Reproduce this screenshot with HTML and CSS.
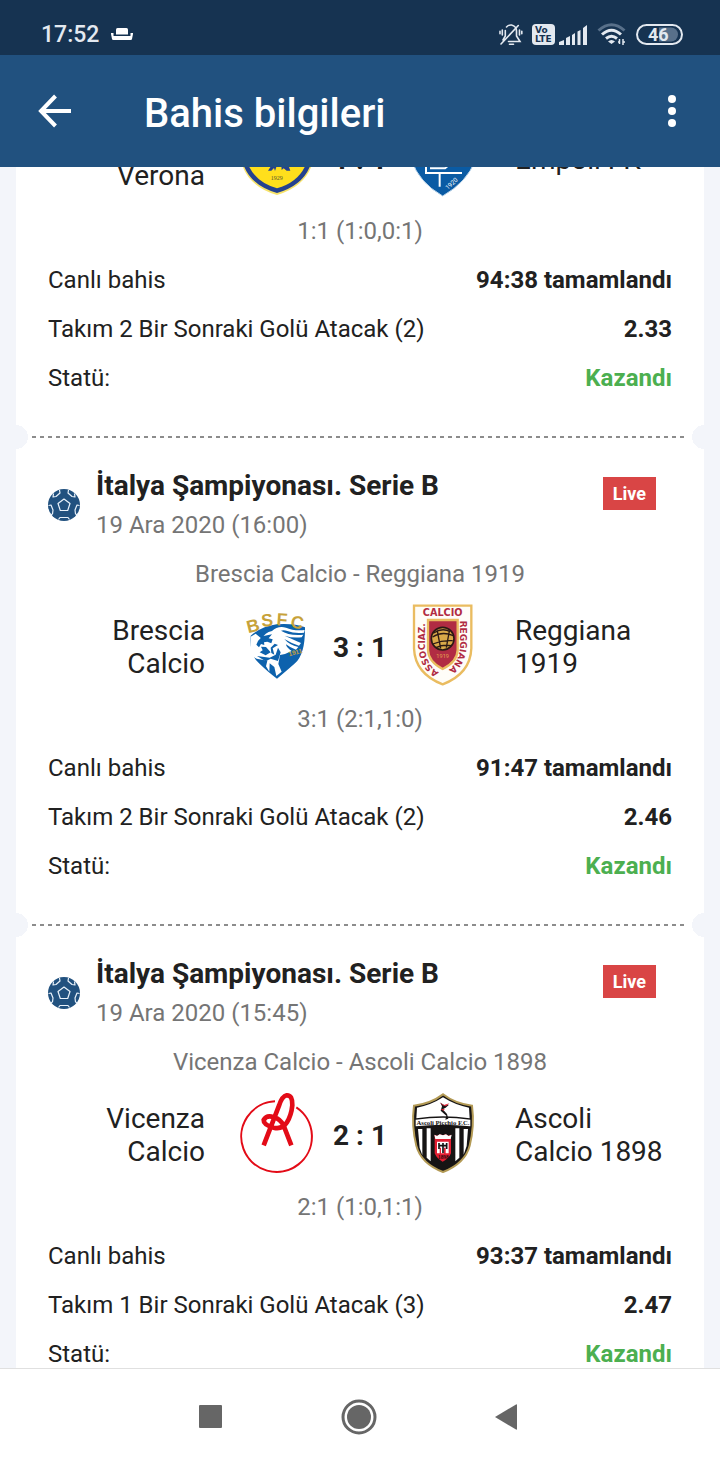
FILE: index.html
```html
<!DOCTYPE html>
<html lang="tr">
  <head>
    <meta charset="UTF-8" />
    <meta name="viewport" content="width=device-width, initial-scale=1.0" />
    <title>Bahis bilgileri</title>
    <link rel="stylesheet" href="styles.css">
  </head>
  <body>
    <svg class="defs" width="0" height="0" aria-hidden="true">
      <symbol id="ball" viewBox="0 0 32 32">
        <circle cx="16" cy="16" r="16" fill="#21517f" />
        <g fill="none" stroke="#e8f1fa" stroke-width="1.2" stroke-linejoin="round">
          <path d="M16 10l6 4.500-2.300 7h-7.400l-2.300-7z" />
          <path d="M5.500 4.500l-.5 3.500 3-.5 4-3.500-.5-3" />
          <path d="M26.500 4.500l.5 3.500-3-.5-4-3.500.5-3" />
          <path d="M.5 16.500l2.500-.5 2 5-.5 4-2.500 1" />
          <path d="M31.500 16.500l-2.500-.5-2 5 .5 4 2.500 1" />
          <path d="M10.500 30.500l1.500-2h8l1.500 2" />
        </g>
      </symbol>
    </svg>

    <div class="screen">
      <div class="status-bar">
        <span class="time">17:52</span>
        <svg class="sofa" width="24" height="14" viewBox="0 0 24 14" fill="#fff">
          <path d="M6 1.500q0-1.500 1.500-1.500h9q1.500 0 1.500 1.500v5H6z" />
          <path d="M1 5h2.500v3h17V5H23v1l-1 5q0 1-1.500 1h-17Q2 12 2 11L1 6z" />
        </svg>
        <div class="status-icons">
          <svg width="24" height="24" viewBox="0 0 24 24" fill="none" stroke="#e3e9f0" stroke-width="1.600" stroke-linecap="round">
            <path d="M7.500 4Q9.500 1.800 12.500 2Q17.500 3 17.500 8.500V13L21 18.500H9.500" />
            <path d="M6.300 7.500V13L4 17M19.300 2.500L2 21M10.500 21.300h4" />
            <path d="M3.300 7v5M1 8.200v2.600M20.500 7v5M22.800 8.200v2.600" />
          </svg>
          <svg class="volte" width="23" height="21" viewBox="0 0 23 21">
            <rect width="23" height="21" rx="4" fill="#e3e9f0" />
            <text x="3" y="9">Vo</text>
            <text x="3" y="18">LTE</text>
          </svg>
          <svg class="signal" width="28" height="20" viewBox="0 0 28 20" fill="#e3e9f0">
            <path d="M0 20v-3l5-2v5zM7 20v-7l4-2v9zM13 20V10l3-2v12zM18.500 20V6.500l3-1.500v15zM24 20V3l4-3v20z" />
          </svg>
          <svg class="wifi" width="30" height="23" viewBox="0 0 30 23" fill="none" stroke="#e3e9f0" stroke-width="3">
            <path d="M1.500 7.500q13-11.500 26 0" stroke="#58708a" />
            <path d="M5 11.500q9.500-8.500 19 0M9 15.500q5.500-4.500 11 0" />
            <path d="M11 18.500q3.500-3 7 0L14.500 21z" fill="#e3e9f0" stroke="none" />
            <path d="M22.500 16v5M26 16v6M21 19h2M26 19h2" stroke-width="1.500" />
          </svg>
          <svg class="battery" width="47" height="21" viewBox="0 0 47 21">
            <path d="M23 3.500h12a7 7 0 0 1 0 14H23z" fill="#58708a" />
            <rect x="1" y="1" width="45" height="19" rx="9.500" fill="none" stroke="#e3e9f0" stroke-width="2" />
            <text x="12" y="17">46</text>
          </svg>
        </div>
      </div>

      <header class="app-bar">
        <button class="icon-btn" aria-label="Geri">
          <svg width="36" height="36" viewBox="0 0 36 36" fill="none" stroke="#fff" stroke-width="4">
            <path d="M18.500 3L4 18l14.500 15M3.500 18H34" />
          </svg>
        </button>
        <h1>Bahis bilgileri</h1>
        <button class="icon-btn menu" aria-label="Menü">
          <svg width="8" height="32" viewBox="0 0 8 32" fill="#fff">
            <circle cx="4" cy="4" r="4" />
            <circle cx="4" cy="16" r="4" />
            <circle cx="4" cy="28" r="4" />
          </svg>
        </button>
      </header>

      <main class="content">
        <div class="coupon">
          <section class="bet scrolled">
            <div class="teams">
              <span class="team home"><br />Verona</span>
              <svg class="crest" viewBox="396 -135 264 264">
                <path d="M422-90V0Q440 78 531 105Q622 78 640 0V-90z" fill="#f7e36a" />
                <path d="M426-90V0Q444 74 531 99Q618 74 636 0V-90z" fill="#24418f" />
                <path d="M440-80V0Q458 64 531 85Q604 64 622 0V-80z" fill="#ffdf1c" />
                <path d="M505 10l7 10-8 12h10l8-8 3 9 5-15zM575 10l-9 8 5 14h-11l-9-7-6 5-1-13z" fill="#24418f" />
                <text x="512" y="60" font-family="Liberation Serif" font-size="18" fill="#5c5630">1929</text>
              </svg>
              <span class="score">1 : 1</span>
              <svg class="crest" viewBox="0 -135 264 264">
                <path d="M35-90V0Q55 66 128 108Q202 66 226 0V-90z" fill="#0a5ba4" stroke="#b9d4ea" stroke-width="3" />
                <g fill="none" stroke="#fff" stroke-width="6">
                  <path d="M78 10V39H186M119 39V80M90 25H135L150 12" />
                </g>
                <text x="143" y="90" transform="rotate(-42 143 90)" font-size="19" fill="#fff">1920</text>
              </svg>
              <span class="team">Empoli FK</span>
            </div>
            <p class="periods">1:1 (1:0,0:1)</p>
            <dl class="rows">
              <div><dt>Canlı bahis</dt><dd>94:38 tamamlandı</dd></div>
              <div><dt>Takım 2 Bir Sonraki Golü Atacak (2)</dt><dd>2.33</dd></div>
              <div><dt>Statü:</dt><dd class="won">Kazandı</dd></div>
            </dl>
          </section>

          <div class="tear"></div>

          <section class="bet">
            <div class="league">
              <svg class="sport" width="32" height="32"><use href="#ball" /></svg>
              <div class="league-info">
                <h2>İtalya Şampiyonası. Serie B</h2>
                <p>19 Ara 2020 (16:00)</p>
              </div>
              <span class="live">Live</span>
            </div>
            <p class="match">Brescia Calcio - Reggiana 1919</p>
            <div class="teams">
              <span class="team home">Brescia<br />Calcio</span>
              <svg class="crest" viewBox="6 24 264 264">
                <path d="M62 122Q58 180 87 205Q118 235 141 251Q160 236 195 205Q226 178 225 97Q190 84 140 88Q95 94 62 122z" fill="#0d62ad" />
                <path d="M96 132Q104 112 126 108Q143 92 168 98Q190 108 224 105L222 113Q193 116 172 108Q161 104 153 107Q177 123 220 119L215 127Q187 130 164 122L204 140L213 144L207 152Q184 145 163 132Q178 150 205 156L198 164Q180 158 168 148Q169 158 185 168L165 177L150 180L145 207L155 230L139 243L133 216L119 205L118 230L108 214L112 197L80 191L62 182V125L77 116z" fill="#fff" />
                <path d="M84 138l13-14 29-6-10 12 12 3-4 12-12-5-10 2 1 8-10-3-6 10-8-8zM93 155l15 1 14 16-15 9-18-9 9-6zM122 158l12-12 10 4-16 10 5 19-9-5zM81 183l38 5 18-9 7-21 8 14-8 26-22-7-15 8z" fill="#0d62ad" />
                <g font-family="Liberation Sans" font-weight="700" fill="#c7a23a">
                  <text x="55" y="115" font-size="53" transform="rotate(-14 55 115)">B</text>
                  <text x="95" y="95" font-size="53" transform="rotate(-5 95 95)">S</text>
                  <text x="139" y="91" font-size="53" transform="rotate(4 139 91)">F</text>
                  <text x="179" y="96" font-size="53" transform="rotate(12 179 96)">C</text>
                  <text x="178" y="184" font-size="19" transform="rotate(-16 178 184)">1911</text>
                </g>
              </svg>
              <span class="score">3 : 1</span>
              <svg class="crest" viewBox="0 24 264 264">
                <path d="M42 32H214V160Q211 236 128 268Q45 236 42 160z" fill="#fffdf8" stroke="#eabc60" stroke-width="7" />
                <path d="M84 75H173V165Q172 200 128 222Q85 200 84 165z" fill="#b12c43" stroke="#eabc60" stroke-width="7" />
                <circle cx="128" cy="131" r="34" fill="#d9a949" stroke="#2b1914" stroke-width="5" />
                <g fill="none" stroke="#2b1914" stroke-width="4">
                  <path d="M101 114Q126 97 151 110M98 126Q126 107 160 122M98 147Q128 135 158 137M108 158Q128 148 154 152M112 108L122 160M148 108L139 158" />
                </g>
                <text x="109" y="189" font-size="17" fill="#e1a14f">1919</text>
                <path id="left-edge" d="M117 232Q78 210 75 158V60" fill="none" />
                <path id="right-edge" d="M181 77V150Q178 204 136 232" fill="none" />
                <g font-family="DejaVu Sans" font-weight="700" font-size="27" fill="#b12c43">
                  <text x="128" y="63" font-size="29" text-anchor="middle">CALCIO</text>
                  <text><textPath href="#left-edge">ASSOCIAZ.</textPath></text>
                  <text><textPath href="#right-edge">REGGIANA</textPath></text>
                </g>
              </svg>
              <span class="team">Reggiana<br />1919</span>
            </div>
            <p class="periods">3:1 (2:1,1:0)</p>
            <dl class="rows">
              <div><dt>Canlı bahis</dt><dd>91:47 tamamlandı</dd></div>
              <div><dt>Takım 2 Bir Sonraki Golü Atacak (2)</dt><dd>2.46</dd></div>
              <div><dt>Statü:</dt><dd class="won">Kazandı</dd></div>
            </dl>
          </section>

          <div class="tear"></div>

          <section class="bet">
            <div class="league">
              <svg class="sport" width="32" height="32"><use href="#ball" /></svg>
              <div class="league-info">
                <h2>İtalya Şampiyonası. Serie B</h2>
                <p>19 Ara 2020 (15:45)</p>
              </div>
              <span class="live">Live</span>
            </div>
            <p class="match">Vicenza Calcio - Ascoli Calcio 1898</p>
            <div class="teams">
              <span class="team home">Vicenza<br />Calcio</span>
              <svg class="crest" viewBox="6 18 264 264">
                <g fill="none" stroke="#e30b17">
                  <path d="M135 49A106 106 0 1 0 199 67" stroke-width="6" />
                  <path d="M101 181L147 62Q156 34 170 31Q188 30 187 61Q184 91 171 112Q157 134 131 128Q100 119 101 105Q110 89 132 97Q151 102 161 122L184 181" stroke-width="14" />
                </g>
              </svg>
              <span class="score">2 : 1</span>
              <svg class="crest" viewBox="0 18 264 264">
                <path d="M129 28Q165 56 216 62Q224 123 209 182Q195 235 129 261Q63 235 49 182Q34 123 42 62Q92 56 129 28z" fill="#161414" stroke="#b39a55" stroke-width="6" />
                <path d="M129 37Q165 60 207 68L209 100Q129 88 49 100L51 68Q94 60 129 37z" fill="#fff" />
                <path d="M47 104Q129 92 211 104V124Q129 114 47 124z" fill="#fff" />
                <path d="M54 132h13v79l-8-22zM80 130h12v99l-12-11zM166 130h12v88l-12 11zM191 132h13l-4 51-9 26z" fill="#fff" />
                <path d="M104 149l8 3 8-4 8 3 9-3 8 4 8-3v56q-7 17-25 25-17-8-24-25z" fill="#e31e32" />
                <path d="M103 149l8 4 8-5 10 3 9-3 8 5 9-4-3 13h-46zM111 170h35v35h-9v-17h-5v17h-9v-17h-4v17h-8z" fill="#fff" />
                <path d="M117 174v18M129 174v30M140 174v18M117 182h23" stroke="#161414" stroke-width="5" fill="none" />
                <path d="M121 53l12 8 14-2-10 9-9 5 13 14 4 14-9 3 3-12-17-15 4-13z" fill="#161414" />
                <path d="M119 52l13 8 16-5-10 9-10-3zM121 73l13-1-3 5z" fill="#dc2436" />
                <text class="ascoli-name" x="129" y="119">Ascoli Picchio F.C.</text>
                <text x="114" y="221" font-family="Liberation Serif" font-weight="700" font-size="16" fill="#25090c">1898</text>
              </svg>
              <span class="team">Ascoli<br />Calcio 1898</span>
            </div>
            <p class="periods">2:1 (1:0,1:1)</p>
            <dl class="rows">
              <div><dt>Canlı bahis</dt><dd>93:37 tamamlandı</dd></div>
              <div><dt>Takım 1 Bir Sonraki Golü Atacak (3)</dt><dd>2.47</dd></div>
              <div><dt>Statü:</dt><dd class="won">Kazandı</dd></div>
            </dl>
          </section>
        </div>
      </main>

      <nav class="nav-bar">
        <button class="nav-btn" aria-label="Son uygulamalar">
          <svg width="36" height="36" viewBox="0 0 36 36"><rect x="6" y="6" width="23" height="23" rx="1" fill="#666" /></svg>
        </button>
        <button class="nav-btn" aria-label="Ana ekran">
          <svg width="36" height="36" viewBox="0 0 36 36">
            <circle cx="18" cy="18" r="16" fill="none" stroke="#666" stroke-width="3" />
            <circle cx="18" cy="18" r="12" fill="#666" />
          </svg>
        </button>
        <button class="nav-btn" aria-label="Geri">
          <svg width="36" height="36" viewBox="0 0 36 36"><path d="M6 18L27 5.500q1-.5 1 .5v24q0 1-1 .5z" fill="#666" /></svg>
        </button>
      </nav>
    </div>
  </body>
</html>
```
FILE: styles.css
```css
* {
  box-sizing: border-box;
  margin: 0;
  padding: 0;
}
body {
  font-family: Roboto, sans-serif;
  font-size: 24px;
  color: #212121;
  background-color: #f3f5fa;
}
button {
  border: none;
  background: none;
  cursor: pointer;
}
svg {
  display: block;
  flex-shrink: 0;
}
.defs {
  position: absolute;
}
.screen {
  height: 100vh;
  display: flex;
  flex-direction: column;
}

/* phone status bar */
.status-bar {
  height: 55px;
  flex-shrink: 0;
  display: flex;
  align-items: center;
  padding: 14px 37px 0 41px;
  background-color: #163351;
}
.time {
  font-size: 23px;
  font-weight: 500;
  line-height: 40px;
  color: #e3e9f0;
}
.sofa {
  margin-left: 11px;
}
.status-icons {
  margin-left: auto;
  display: flex;
  align-items: center;
}
.volte {
  margin-left: 9px;
}
.volte text {
  font-family: "DejaVu Sans", sans-serif;
  font-size: 9px;
  font-weight: 700;
  fill: #163351;
}
.signal {
  margin-left: 4px;
}
.wifi {
  margin-left: 10px;
}
.battery {
  margin-left: 9px;
}
.battery text {
  font-size: 18px;
  font-weight: 700;
  fill: #e3e9f0;
}

/* app header */
.app-bar {
  height: 112px;
  flex-shrink: 0;
  display: flex;
  align-items: center;
  padding: 0 44px 0 37px;
  background-color: #21517f;
}
.app-bar h1 {
  margin: 4px 0 0 71px;
  font-size: 40px;
  font-weight: 500;
  color: #fff;
}
.menu {
  margin-left: auto;
}

.content {
  flex: 1;
  min-height: 0;
  overflow: hidden;
  padding: 0 16px;
}
.coupon {
  background-color: #fff;
}
.bet {
  padding: 17px 32px 22px;
}
.scrolled {
  margin-top: -56px;
  padding-top: 0;
}
.tear {
  height: 24px;
  display: flex;
  align-items: center;
  background: radial-gradient(circle at 0 50%, #f3f5fa 12px, transparent 12px),
    radial-gradient(circle at 100% 50%, #f3f5fa 12px, transparent 12px);
}
.tear::after {
  content: "";
  flex: 1;
  height: 2px;
  margin: 0 20px 0 16px;
  background: repeating-linear-gradient(90deg, #8c8c8c 0 4px, transparent 4px 8px);
}

.league {
  display: flex;
  align-items: center;
}
.league-info {
  flex: 1;
  margin-left: 16px;
}
.league h2 {
  font-size: 28px;
  font-weight: 700;
  line-height: 40px;
}
.league p {
  line-height: 38px;
  color: #757575;
}
.live {
  align-self: flex-start;
  margin: 11px 16px 0 0;
  padding: 0 10px;
  font-size: 18px;
  font-weight: 700;
  line-height: 33px;
  color: #fff;
  background-color: #d94545;
}
.match,
.periods {
  line-height: 49px;
  text-align: center;
  color: #757575;
}
.match {
  margin-top: 6px;
}
.teams {
  display: grid;
  grid-template-columns: 1fr 88px 80px 88px 1fr;
  align-items: center;
  margin: 4px 0;
}
.team {
  padding-left: 27px;
  font-size: 28px;
  line-height: 33px;
  white-space: nowrap;
}
.home {
  padding: 0 27px 0 0;
  text-align: right;
}
.crest {
  width: 88px;
  height: 88px;
}
.score {
  font-size: 28px;
  font-weight: 700;
  text-align: center;
}
.ascoli-name {
  font-family: "Liberation Serif", serif;
  font-size: 20px;
  font-weight: 700;
  text-anchor: middle;
  fill: #161414;
}

.rows div {
  display: flex;
  justify-content: space-between;
  line-height: 49px;
}
.rows dd {
  font-weight: 700;
}
.rows .won {
  color: #4caf50;
}

/* android buttons */
.nav-bar {
  height: 96px;
  flex-shrink: 0;
  display: flex;
  justify-content: center;
  gap: 112px;
  padding-right: 2px;
  border-top: 1px solid #e0e0e0;
  background-color: #fff;
}
.nav-btn {
  width: 36px;
  display: flex;
  align-items: center;
  justify-content: center;
}
```
